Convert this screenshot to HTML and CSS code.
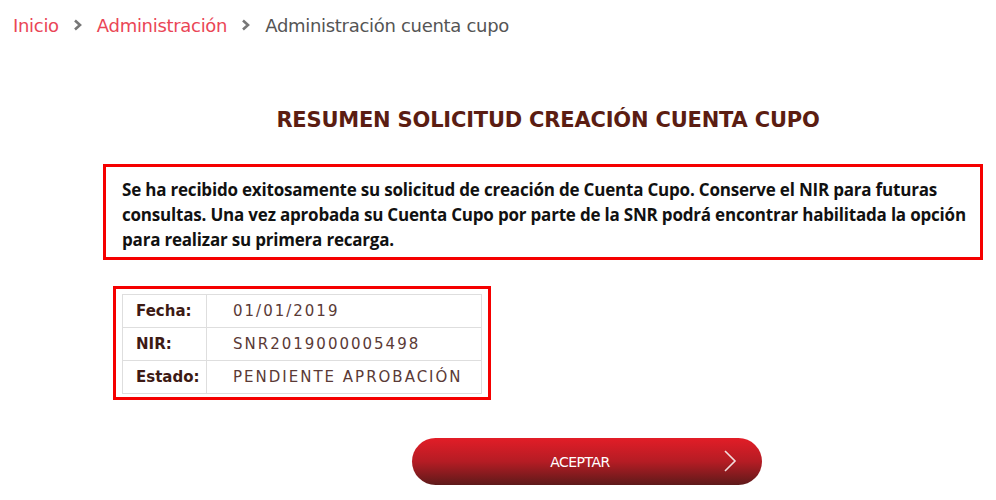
FILE: index.html
```html
<!DOCTYPE html>
<html lang="es">
<head>
<meta charset="utf-8">
<title>Administración cuenta cupo</title>
<link rel="stylesheet" href="styles.css">
</head>
<body>
<nav class="crumbs">
  <a class="crumb-link" href="#">Inicio</a>
  <span class="sep"><svg width="10" height="12" viewBox="0 0 10 12"><path d="M2 1.5 L7 6 L2 10.5" fill="none" stroke="#777" stroke-width="2.6"/></svg></span>
  <a class="crumb-link" href="#">Administración</a>
  <span class="sep"><svg width="10" height="12" viewBox="0 0 10 12"><path d="M2 1.5 L7 6 L2 10.5" fill="none" stroke="#777" stroke-width="2.6"/></svg></span>
  <span class="crumb-current">Administración cuenta cupo</span>
</nav>
<main class="content">
  <h1 class="title">RESUMEN SOLICITUD CREACIÓN CUENTA CUPO</h1>
  <div class="message">Se ha recibido exitosamente su solicitud de creación de Cuenta Cupo. Conserve el NIR para futuras<br>consultas. Una vez aprobada su Cuenta Cupo por parte de la SNR podrá encontrar habilitada la opción<br>para realizar su primera recarga.</div>
  <div class="summary">
    <table class="summary-table">
      <tr><th>Fecha:</th><td>01/01/2019</td></tr>
      <tr><th>NIR:</th><td>SNR2019000005498</td></tr>
      <tr><th>Estado:</th><td>PENDIENTE APROBACIÓN</td></tr>
    </table>
  </div>
  <div class="actions">
    <button class="btn-accept" type="button"><span class="btn-label">ACEPTAR</span><svg class="btn-arrow" width="14" height="22" viewBox="0 0 14 22"><path d="M2 1 L12 11 L2 21" fill="none" stroke="#f2dede" stroke-width="1.6"/></svg></button>
  </div>
</main>
</body>
</html>
```
FILE: styles.css
```css
html, body { margin: 0; padding: 0; background: #fff; }
body { font-family: "DejaVu Sans", sans-serif; }
.crumbs {
  display: flex; align-items: center;
  height: 50px; padding-left: 13px;
  font-size: 18px; letter-spacing: -0.3px;
}
.crumb-link { color: #ea4656; text-decoration: none; }
.crumb-current { color: #555; }
.sep { display: inline-flex; align-items: center; margin: 0 14px; }
.content { display: flex; flex-direction: column; }
.title {
  margin: 57px 0 0 100px; text-align: center;
  font-size: 21px; font-weight: bold; color: #5b1d12; letter-spacing: -0.2px;
  line-height: 26px; align-self: center;
}
.message {
  margin: 31px 0 0 103px; width: 856px;
  border: 3px solid #f50000;
  padding: 10px 2px 5px 16px;
  font-family: "Open Sans", sans-serif; font-weight: bold; font-size: 17px;
  line-height: 25px; color: #111; letter-spacing: -0.2px;
  white-space: nowrap;
}
.summary {
  margin: 26px 0 0 113px; width: 360px;
  border: 3px solid #f50000;
  padding: 5px 6px 3px 6px;
}
.summary-table { border-collapse: collapse; width: 100%; }
.summary-table th, .summary-table td {
  border: 1px solid #dedede; height: 32px; padding: 0; text-align: left;
}
.summary-table th {
  width: 70px; padding-left: 13px; font-weight: bold; color: #3d1a14; font-size: 15px;
}
.summary-table td {
  padding-left: 26px; color: #5a3a36; font-size: 15px; letter-spacing: 2px;
}
.actions { margin: 38px 0 0 412px; }
.btn-accept {
  position: relative;
  width: 350px; height: 47px; border: none; border-radius: 24px;
  background: linear-gradient(#e21d27, #b51c24 50%, #5e1a1a);
  color: #fff; font-family: "DejaVu Sans", sans-serif; font-size: 14px; letter-spacing: -0.5px;
  display: flex; align-items: center; justify-content: center; padding: 0;
  cursor: pointer;
}
.btn-label { margin-left: -14px; }
.btn-arrow { position: absolute; right: 25px; top: 12px; }
```
